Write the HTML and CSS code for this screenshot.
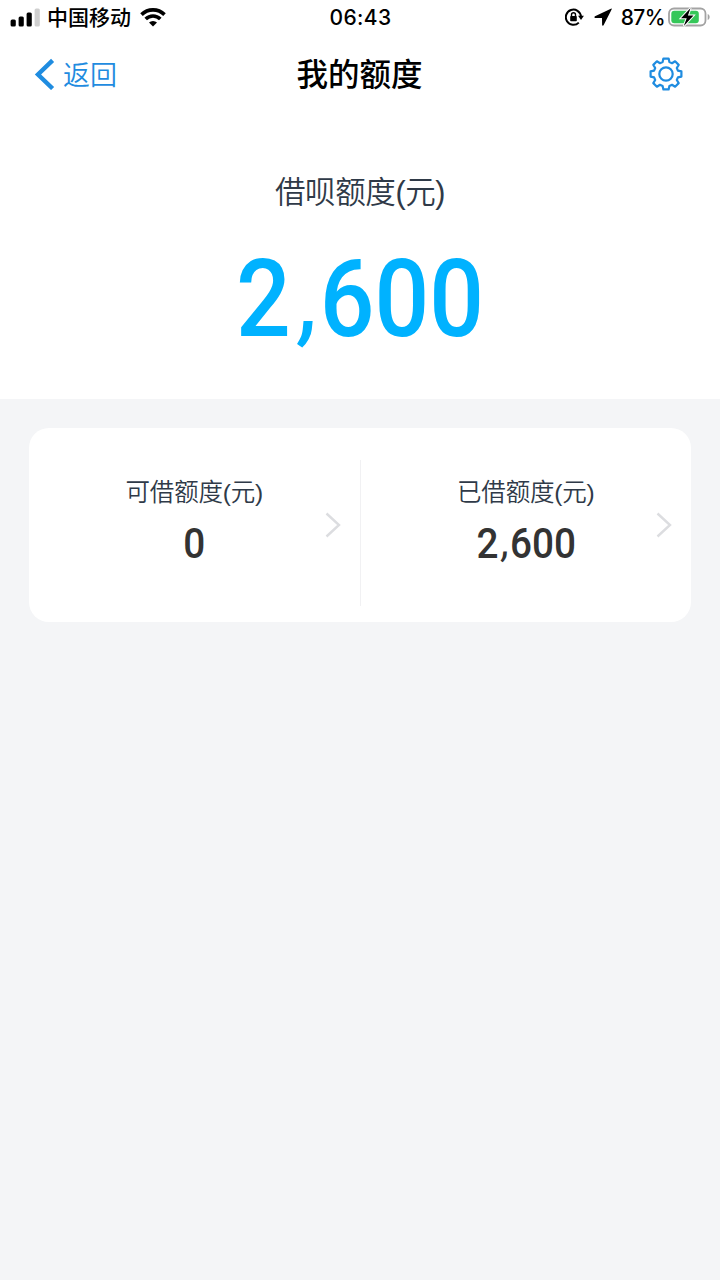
FILE: index.html
```html
<!DOCTYPE html>
<html lang="zh-CN">
<head>
  <meta charset="UTF-8">
  <meta name="viewport" content="width=device-width, initial-scale=1.0">
  <title>我的额度</title>
  <link rel="stylesheet" href="styles.css">
</head>
<body>

  <div class="status-bar">
    <div class="status-left">
      <svg class="signal" width="30" height="20" viewBox="0 0 30 20">
        <rect x="0.6" y="12.5" width="5.2" height="7" rx="1.5"/>
        <rect x="8.6" y="9.5" width="5.2" height="10" rx="1.5"/>
        <rect x="16.6" y="5.5" width="5.2" height="14" rx="1.5"/>
        <rect class="signal-off" x="24.6" y="1.5" width="5.2" height="18" rx="1.5"/>
      </svg>
      <span class="carrier">中国移动</span>
      <svg class="wifi" width="26" height="19" viewBox="0 0 26 19">
        <path d="M1.5 6.6a16.3 16.3 0 0 1 23 0M5.7 11.1a10.3 10.3 0 0 1 14.6 0"/>
        <path class="wifi-dot" d="M13 18.6l-4-4a5.7 5.7 0 0 1 8 0z"/>
      </svg>
    </div>
    <div class="status-time">06:43</div>
    <div class="status-right">
      <svg class="lock" width="19" height="18" viewBox="0 0 19 18">
        <path class="lock-ring" d="M13.8 14.6A7.6 7.6 0 1 1 16 8.4"/>
        <path d="M13.1 7.8h5.8l-2.9 4.1z"/>
        <rect x="5.2" y="8" width="6.6" height="5.2" rx="0.8"/>
        <path class="lock-shackle" d="M6.5 8.3V6.7a2 2 0 0 1 4 0v1.6"/>
      </svg>
      <svg class="location" width="18" height="18" viewBox="0 0 18 18">
        <path d="M16.9 0.7L1 8.2c-.9.5-.7 1.7.2 1.7l6.8.1.1 6.8c0 1 1.2 1.2 1.6.3L17.6 1.5c.3-.7-.1-1.1-.7-.8z"/>
      </svg>
      <span class="percent">87%</span>
      <svg class="battery" width="43" height="20" viewBox="0 0 43 20">
        <rect class="battery-case" x="1" y="1.5" width="36.5" height="17" rx="5"/>
        <rect class="battery-level" x="3.3" y="3.8" width="27.5" height="12.4" rx="3"/>
        <path class="battery-cap" d="M39.7 7c2.6 1 2.6 5 0 6z"/>
        <path class="battery-bolt" d="M22.6.9L13 11.2h5.7L15.8 19l9.7-10.4h-5.6z"/>
      </svg>
    </div>
  </div>

  <div class="nav-bar">
    <div class="back">
      <svg width="21" height="32" viewBox="0 0 21 32">
        <path d="M18.6 2.4L4 16.5l14.6 14"/>
      </svg>
      <span>返回</span>
    </div>
    <h1 class="nav-title">我的额度</h1>
    <div class="settings">
      <svg width="34" height="34" viewBox="-17 -17 34 34">
        <path d="M-3.4 -11.9L-2.6 -15.4H2.6L3.4 -11.9L6 -10.8L9.1 -12.7L12.7 -9.1L10.8 -6L11.9 -3.4L15.4 -2.6V2.6L11.9 3.4L10.8 6L12.7 9.1L9.1 12.7L6 10.8L3.4 11.9L2.6 15.4H-2.6L-3.4 11.9L-6 10.8L-9.1 12.7L-12.7 9.1L-10.8 6L-11.9 3.4L-15.4 2.6V-2.6L-11.9 -3.4L-10.8 -6L-12.7 -9.1L-9.1 -12.7L-6 -10.8Z"/>
        <circle r="6.7"/>
      </svg>
    </div>
  </div>

  <div class="total">
    <div class="total-label">借呗额度(元)</div>
    <div class="total-amount">2<span class="comma">,</span>600</div>
  </div>

  <div class="card">
    <div class="card-item">
      <div class="item-label">可借额度(元)</div>
      <div class="item-amount">0</div>
      <svg class="arrow" width="16" height="26" viewBox="0 0 16 26">
        <path d="M1.5 1.5L14 13L1.5 24.5"/>
      </svg>
    </div>
    <div class="card-item">
      <div class="item-label">已借额度(元)</div>
      <div class="item-amount">2<span class="comma">,</span>600</div>
      <svg class="arrow" width="16" height="26" viewBox="0 0 16 26">
        <path d="M1.5 1.5L14 13L1.5 24.5"/>
      </svg>
    </div>
  </div>

</body>
</html>
```

FILE: styles.css
```css
* {
  box-sizing: border-box;
}

body {
  margin: 0;
  min-height: 1280px;
  background-color: #f4f5f7;
  font-family: "Noto Sans CJK SC", sans-serif;
  color: #2f3a48;
}

svg {
  display: block;
  flex: none;
}

.status-bar {
  display: grid;
  grid-template-columns: 1fr auto 1fr;
  align-items: center;
  height: 34px;
  padding: 0 9px 0 10px;
  background-color: #fff;
  color: #000;
}

.status-left,
.status-right {
  display: flex;
  align-items: center;
}

.status-right {
  justify-content: flex-end;
}

.signal-off {
  fill: #cfcfcf;
}

.carrier {
  margin: 0 9px 2px 7px;
  font-size: 21px;
  font-weight: 500;
  line-height: 32px;
}

.wifi path {
  fill: none;
  stroke: #000;
  stroke-width: 3.6;
}

.wifi .wifi-dot {
  fill: #000;
  stroke: none;
}

.status-time {
  font-family: Inter, sans-serif;
  font-size: 21px;
  font-weight: 450;
  letter-spacing: 0.4px;
}

.lock-ring,
.lock-shackle {
  fill: none;
  stroke: #000;
  stroke-width: 2;
}

.lock-shackle {
  stroke-width: 1.4;
}

.location {
  margin-left: 10px;
}

.percent {
  margin: 0 3px 0 9px;
  font-family: Inter, sans-serif;
  font-size: 21px;
  font-weight: 450;
  letter-spacing: -0.6px;
}

.battery-case {
  fill: none;
  stroke: #a3a3a3;
  stroke-width: 1.8;
}

.battery-level {
  fill: #35c759;
}

.battery-cap {
  fill: #a3a3a3;
}

.battery-bolt {
  fill: #000;
  stroke: #fff;
  stroke-width: 2;
  paint-order: stroke;
}

.nav-bar {
  display: grid;
  grid-template-columns: 1fr auto 1fr;
  align-items: center;
  height: 80px;
  padding: 0 37px 1px 34px;
  background-color: #fff;
}

.back {
  display: flex;
  align-items: center;
  gap: 8px;
  color: #1f8ce0;
  font-size: 27px;
  font-weight: 350;
  line-height: 40px;
}

.back svg path {
  fill: none;
  stroke: #1f8ce0;
  stroke-width: 4.4;
}

.nav-title {
  margin: 0 0 3px 2px;
  color: #000;
  font-size: 31.5px;
  font-weight: 500;
  line-height: 40px;
}

.settings {
  justify-self: end;
}

.settings svg {
  fill: none;
  stroke: #1f8ce0;
  stroke-width: 2.2;
  stroke-linejoin: round;
}

.total {
  height: 285px;
  padding-top: 56px;
  background-color: #fff;
  text-align: center;
}

.total-label {
  font-family: "Liberation Sans", "Noto Sans CJK SC", sans-serif;
  font-size: 30.5px;
  font-weight: 350;
  line-height: 44px;
  letter-spacing: -0.4px;
}

.total-amount {
  margin-top: 22px;
  color: #00b2ff;
  font-family: Roboto, sans-serif;
  font-size: 107px;
  font-weight: 500;
  line-height: 128px;
  transform: scaleX(0.9);
}

.comma {
  display: inline-block;
  margin: 0 0.01em 0 0.1em;
  font-size: 0.9em;
  line-height: 1;
  transform: translateY(-0.04em) skewX(-6deg);
}

.card {
  display: flex;
  height: 194px;
  margin: 29px 29px 0;
  padding: 32px 0 16px;
  border-radius: 20px;
  background-color: #fff;
}

.card-item {
  position: relative;
  flex: 1;
  padding-top: 15px;
  text-align: center;
}

.card-item + .card-item {
  border-left: 1px solid #f1f1f3;
}

.item-label {
  font-family: "Liberation Sans", "Noto Sans CJK SC", sans-serif;
  font-size: 24.5px;
  font-weight: 350;
  line-height: 36px;
  letter-spacing: -0.2px;
}

.item-amount {
  margin-top: 7px;
  color: #333;
  font-family: Roboto, sans-serif;
  font-size: 43px;
  font-weight: 500;
  line-height: 50px;
  transform: scaleX(0.9);
}

.arrow {
  position: absolute;
  top: 52px;
  right: 19px;
}

.arrow path {
  fill: none;
  stroke: #dcdde0;
  stroke-width: 2.4;
}
```
